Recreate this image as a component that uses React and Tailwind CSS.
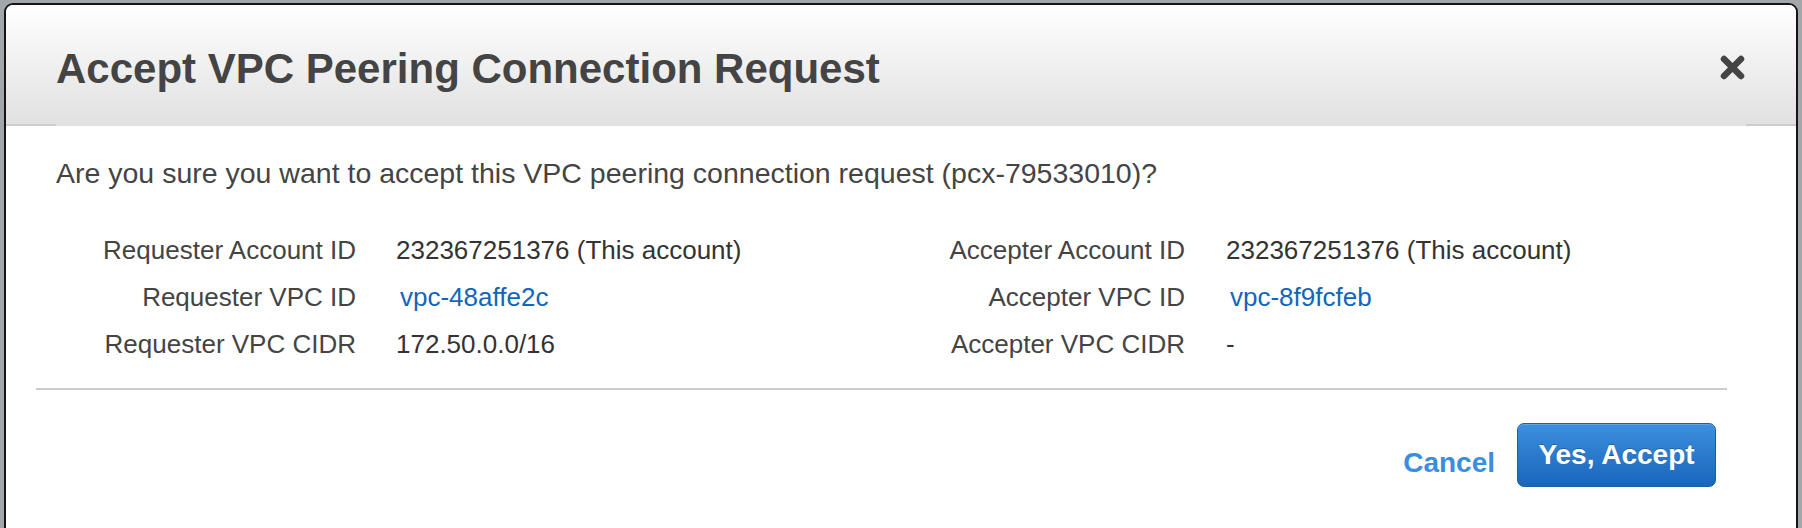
export default function App() {
  const rows = [
    ["Requester Account ID", "232367251376 (This account)", false, "Accepter Account ID", "232367251376 (This account)", false],
    ["Requester VPC ID", "vpc-48affe2c", true, "Accepter VPC ID", "vpc-8f9fcfeb", true],
    ["Requester VPC CIDR", "172.50.0.0/16", false, "Accepter VPC CIDR", "-", false],
  ];
  return (
    <div className="w-[1802px] h-[528px] overflow-hidden bg-[#a3a7ab] pt-[3px] pl-[4px] font-['Liberation_Sans',Arial,sans-serif]">
      <div className="w-[1794px] h-[560px] border-2 border-[#141414] rounded-t-[9px] bg-white overflow-hidden">
        {/* header */}
        <div className="h-[119px] bg-gradient-to-b from-[#ffffff] to-[#e1e1e1] flex items-center justify-between pt-[8px] pl-[50px] pr-[51px]">
          <h1 className="text-[42px] leading-[48px] font-bold text-[#444444]">
            Accept VPC Peering Connection Request
          </h1>
          <svg width="25" height="25" viewBox="0 0 25 25" className="mt-[-2px]">
            <path d="M4 4 L21 21 M21 4 L4 21" stroke="#444444" strokeWidth="6.5" strokeLinecap="round" />
          </svg>
        </div>
        <div className="flex h-[2px] bg-[#e1e1e1]">
          <div className="w-[50px] bg-[#cdcdcd]" />
          <div className="flex-1" />
          <div className="w-[50px] bg-[#cdcdcd]" />
        </div>
        {/* body */}
        <div className="pl-[50px] pt-[31px]">
          <p className="text-[28.5px] leading-[32px] text-[#444444]">
            Are you sure you want to accept this VPC peering connection request (pcx-79533010)?
          </p>
          <div className="mt-[38px] grid grid-cols-[300px_529px_300px_1fr] text-[26px] leading-[47px] text-[#333333]">
            {rows.map((r, i) => (
              <div key={i} className="contents">
                <div className="text-right text-[#444444] whitespace-nowrap">{r[0]}</div>
                <div className="pl-[40px] whitespace-nowrap">
                  {r[2] ? <span className="ml-[4px] text-[#1166bb]">{r[1]}</span> : r[1]}
                </div>
                <div className="text-right text-[#444444] whitespace-nowrap">{r[3]}</div>
                <div className="pl-[41px] whitespace-nowrap">
                  {r[5] ? <span className="ml-[4px] text-[#1166bb]">{r[4]}</span> : r[4]}
                </div>
              </div>
            ))}
          </div>
        </div>
        <div className="mt-[20px] ml-[30px] mr-[69px] h-[2px] bg-[#cccccc]" />
        <div className="mt-[33px] flex justify-end items-center gap-[22px] pr-[80px]">
          <span className="mt-[16px] text-[28px] leading-[32px] font-bold text-[#3a8ee0]">Cancel</span>
          <button className="w-[199px] h-[64px] rounded-[7px] border border-[#1a5ea8] bg-gradient-to-b from-[#3c8fde] to-[#1966bc] text-white font-bold text-[28px] leading-[32px] [text-shadow:0_-1px_0_rgba(0,0,0,0.25)] shadow-[inset_0_1px_0_rgba(255,255,255,0.2)]">
            Yes, Accept
          </button>
        </div>
      </div>
    </div>
  );
}
